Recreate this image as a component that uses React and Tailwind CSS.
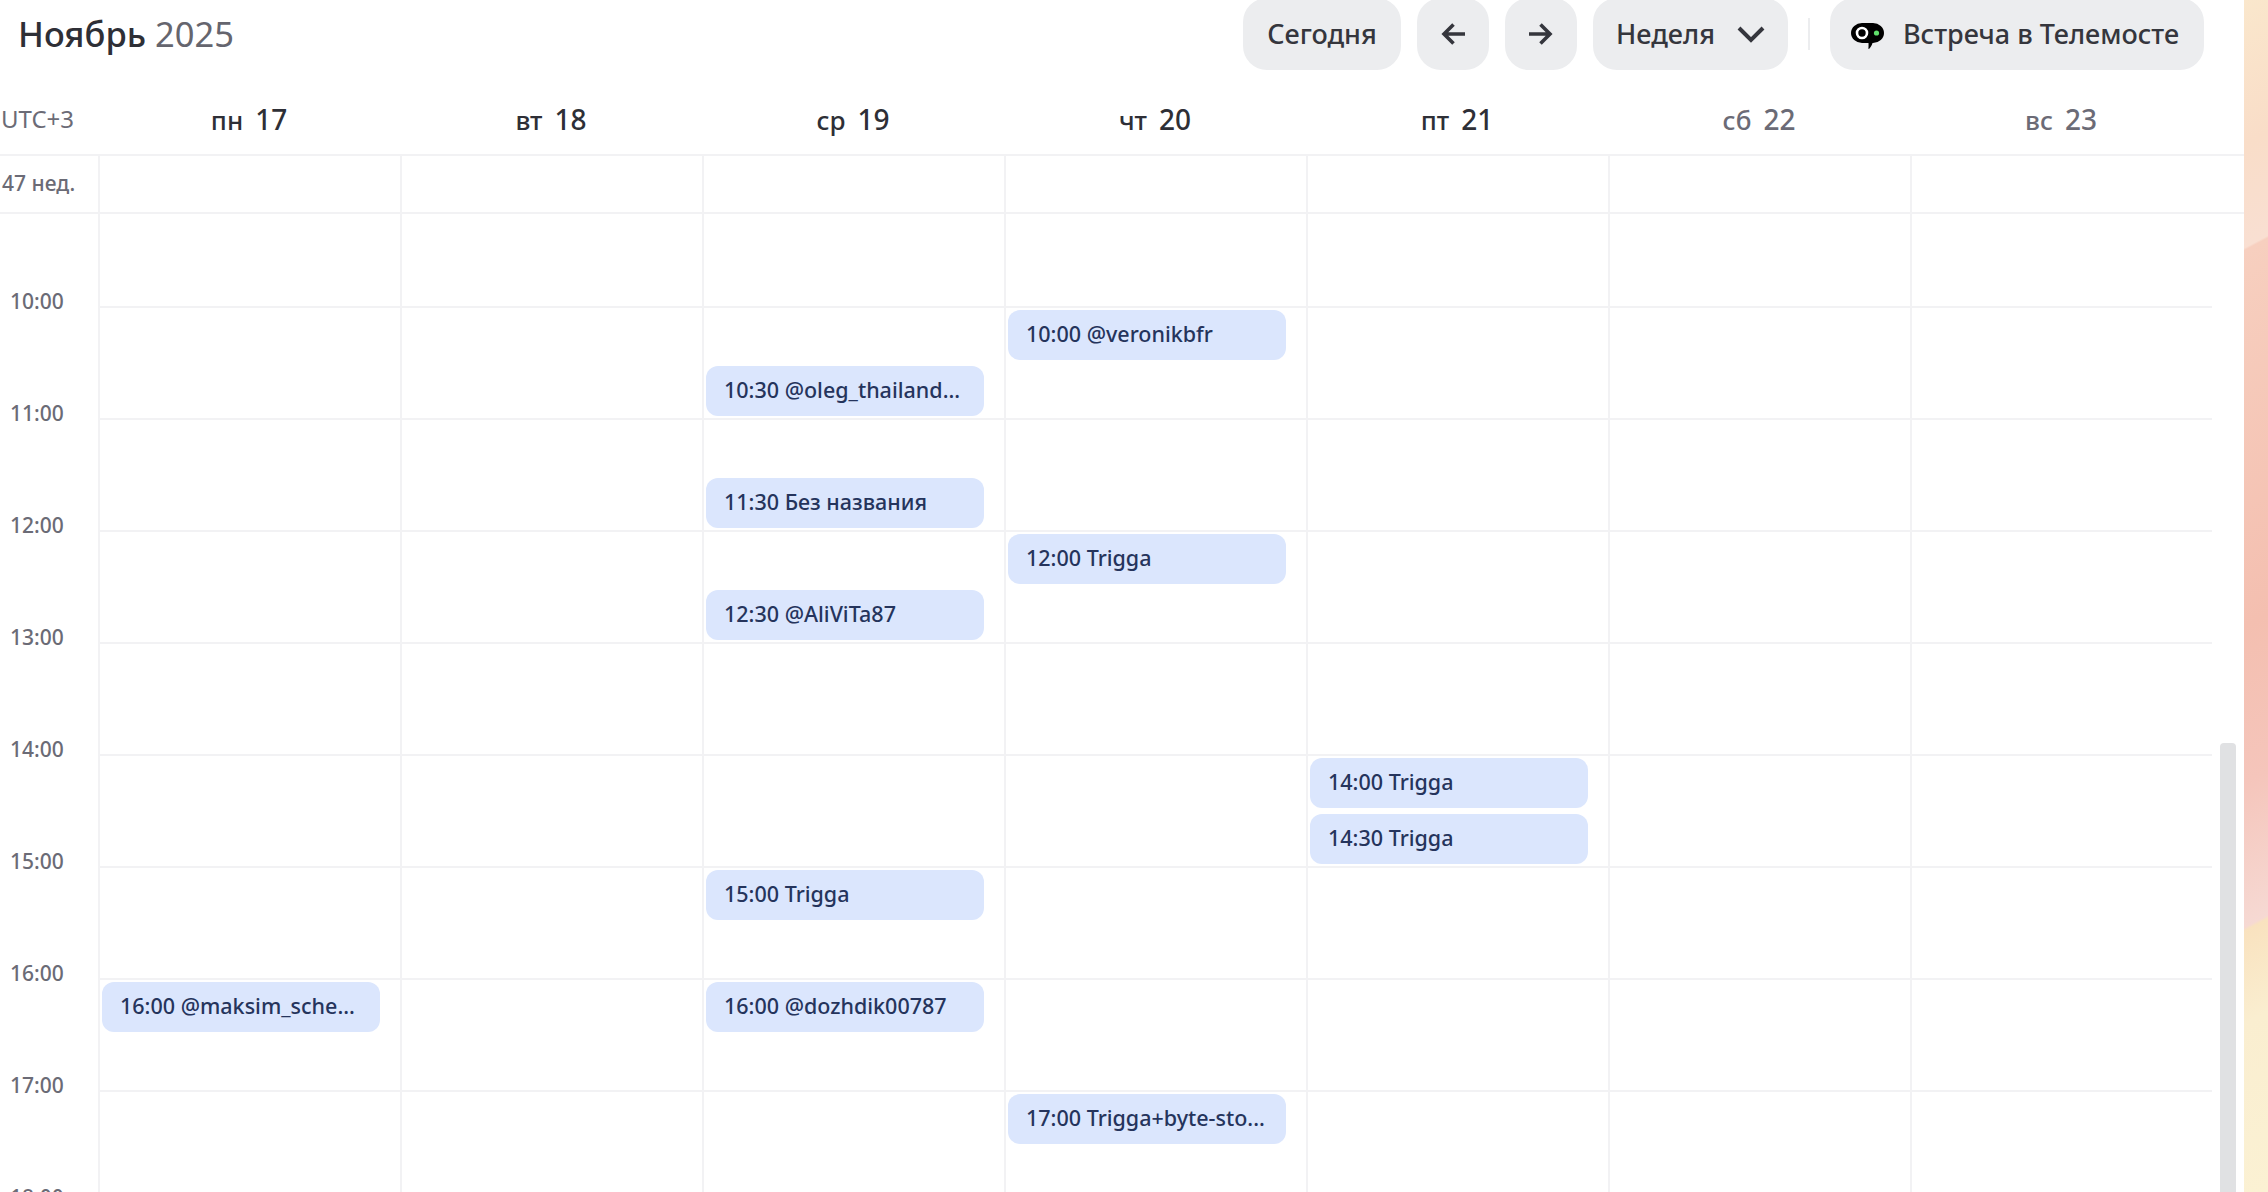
import React from "react";

const FONT = "font-['Noto_Sans',sans-serif]";

const DAYS = [
  { name: "пн", num: 17 },
  { name: "вт", num: 18 },
  { name: "ср", num: 19 },
  { name: "чт", num: 20 },
  { name: "пт", num: 21 },
  { name: "сб", num: 22, weekend: true },
  { name: "вс", num: 23, weekend: true },
];

const HOURS = [10, 11, 12, 13, 14, 15, 16, 17, 18];

// day: column index, at: time in hours
const EVENTS = [
  { day: 0, at: 16, title: "16:00 @maksim_sche..." },
  { day: 2, at: 10.5, title: "10:30 @oleg_thailand..." },
  { day: 2, at: 11.5, title: "11:30 Без названия" },
  { day: 2, at: 12.5, title: "12:30 @AliViTa87" },
  { day: 2, at: 15, title: "15:00 Trigga" },
  { day: 2, at: 16, title: "16:00 @dozhdik00787" },
  { day: 3, at: 10, title: "10:00 @veronikbfr" },
  { day: 3, at: 12, title: "12:00 Trigga" },
  { day: 3, at: 17, title: "17:00 Trigga+byte-sto..." },
  { day: 4, at: 14, title: "14:00 Trigga" },
  { day: 4, at: 14.5, title: "14:30 Trigga" },
];

const rowOf = (hour) => 2 + (hour - 10) * 2;

function ToolButton({ children, className = "" }) {
  return (
    <button className={`h-[72px] rounded-[24px] bg-[#ecedef] flex items-center justify-center text-[27px] font-medium text-[#35363d] ${className}`}>
      {children}
    </button>
  );
}

function Header() {
  return (
    <div className="h-[70px] flex items-start pl-[18px] pr-[40px]">
      <h1 className="h-[68px] flex items-center gap-[9px] text-[34.5px] font-medium text-[#2e2f36]">
        Ноябрь <span className="font-normal text-[#65656e]">2025</span>
      </h1>
      <div className="ml-auto -mt-[2px] flex items-center gap-[16px]">
        <ToolButton className="w-[158px]">Сегодня</ToolButton>
        <ToolButton className="w-[72px]">
          <svg width="26" height="24" viewBox="0 0 26 24" fill="none" stroke="#35363d" strokeWidth="3.6">
            <path d="M25 12H4M13.5 2.5 4 12l9.5 9.5" />
          </svg>
        </ToolButton>
        <ToolButton className="w-[72px]">
          <svg width="26" height="24" viewBox="0 0 26 24" fill="none" stroke="#35363d" strokeWidth="3.6">
            <path d="M1 12h21M12.5 2.5 22 12l-9.5 9.5" />
          </svg>
        </ToolButton>
        <ToolButton className="w-[195px] gap-[22px]">
          Неделя
          <svg width="28" height="18" viewBox="0 0 28 18" fill="none" stroke="#35363d" strokeWidth="4">
            <path d="M2 3l12 12L26 3" />
          </svg>
        </ToolButton>
        <div className="w-[2px] h-[32px] mx-[4px] bg-[#ecedef]" />
        <ToolButton className="w-[374px] gap-[19px]">
          <svg className="mt-[4px] -ml-[4px]" width="33" height="26" viewBox="0 0 33 26">
            <path d="M11 0h11a11 10 0 0 1 0 20h-.5c-.6 2.4-2 4.4-3.5 6l-.6-.2c.2-2 .2-4 .1-5.8H11A11 10 0 0 1 11 0z" fill="#000" />
            <circle cx="11" cy="10" r="5" fill="none" stroke="#fff" strokeWidth="2.6" />
            <circle cx="25.5" cy="10" r="2.6" fill="#5fe06a" />
          </svg>
          Встреча в Телемосте
        </ToolButton>
      </div>
    </div>
  );
}

function DayHeader() {
  return (
    <div className="h-[86px] border-b-2 border-[#f2f2f4] grid grid-cols-[98px_repeat(7,302px)] items-center">
      <div className="pl-[1px] pt-[13px] text-[24px] text-[#6b6b76]">UTC+3</div>
      {DAYS.map((d) => (
        <div
          key={d.num}
          className={`pt-[13px] flex items-baseline justify-center gap-[12px] ${d.weekend ? "text-[#6b6b76]" : "text-[#2e2f36]"}`}
        >
          <span className="text-[26px] font-medium">{d.name}</span>
          <span className="text-[28px] font-medium">{d.num}</span>
        </div>
      ))}
    </div>
  );
}

function WeekRow() {
  return (
    <div className="h-[58px] border-b-2 border-[#f2f2f4] grid grid-cols-[98px_repeat(7,302px)]">
      <div className="pl-[2px] flex items-center text-[21px] font-medium text-[#6b6b76]">47 нед.</div>
      {DAYS.map((d) => (
        <div key={d.num} className="border-l-2 border-[#f2f2f4]" />
      ))}
    </div>
  );
}

function TimeGrid() {
  return (
    <div className="grid grid-cols-[98px_repeat(7,302px)] grid-rows-[92px_repeat(18,56px)]">
      {/* column lines */}
      {DAYS.map((d, i) => (
        <div
          key={d.num}
          className="border-l-2 border-[#f2f2f4]"
          style={{ gridColumn: i + 2, gridRow: "1 / -1" }}
        />
      ))}

      {/* hour lines and labels */}
      {HOURS.map((h) => (
        <React.Fragment key={h}>
          <div
            className="border-t-2 border-[#f2f2f4]"
            style={{ gridColumn: "2 / -1", gridRow: `${rowOf(h)} / span 2` }}
          />
          <div
            className="self-end pl-[10px] -mb-[9px] text-[21px] font-medium leading-[28px] text-[#6b6b76]"
            style={{ gridColumn: 1, gridRow: rowOf(h) - 1 }}
          >
            {h}:00
          </div>
        </React.Fragment>
      ))}

      {/* events */}
      {EVENTS.map((e) => (
        <div
          key={e.title + e.day}
          className="ml-[4px] mt-[4px] w-[278px] h-[50px] rounded-[12px] bg-[#dbe6fd] pl-[18px] pb-[2px] flex items-center text-[21.5px] font-medium text-[#25345c] whitespace-nowrap overflow-hidden"
          style={{ gridColumn: e.day + 2, gridRow: rowOf(e.at) }}
        >
          {e.title}
        </div>
      ))}
    </div>
  );
}

export default function App() {
  return (
    <div className={`w-[2268px] h-[1192px] overflow-hidden flex bg-white ${FONT}`}>
      <div className="relative w-[2244px] shrink-0">
        <Header />
        <DayHeader />
        <WeekRow />
        <TimeGrid />
        {/* scrollbar thumb */}
        <div className="absolute left-[2220px] top-[743px] bottom-0 w-[16px] rounded-t-[4px] bg-[#e0e1e3]" />
      </div>
      <div className="w-[24px] shrink-0 bg-[linear-gradient(152deg,#fae7cc_0%,#f9ddc8_12%,#f9dfd2_20.6%,#f7cfbf_20.8%,#f4bfb0_52%,#f5c5bb_65%,#f6d9d3_77%,#f9e2bf_77.3%,#faeed0_85%,#fbf1d3_100%)]" />
    </div>
  );
}
